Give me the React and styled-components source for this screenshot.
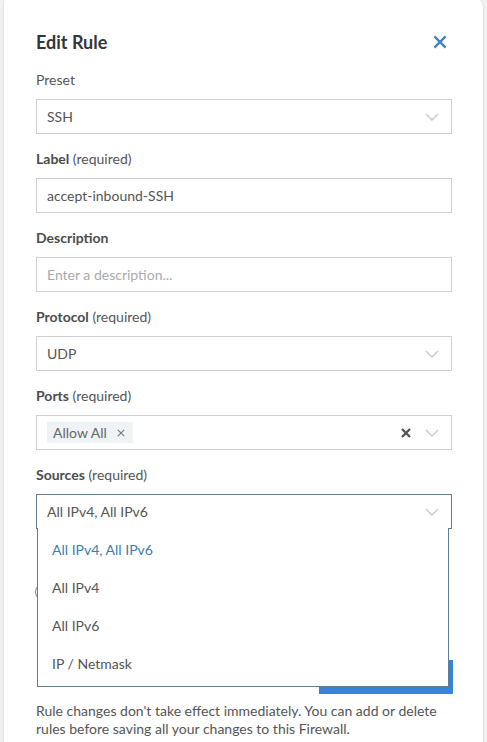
import React from 'react';
import styled, { createGlobalStyle } from 'styled-components';

const GlobalStyle = createGlobalStyle`
    html, body {
        margin: 0;
        padding: 0;
        background: #f1f1f1;
        font-family: Lato, "Open Sans", sans-serif;
    }
    * { box-sizing: border-box; }
`

const Card = styled.div`
    margin: -3px 4px 0 4px;
    min-height: 760px;
    background: #fff;
    border-radius: 6px 10px 0 0;
    box-shadow: 0 0 3px rgba(0, 0, 0, 0.12);
    padding: 33px 31px 0 32px;
    color: #555;
`

const Header = styled.div`
    display: flex;
    align-items: center;
    justify-content: space-between;
    height: 24px;
    margin-bottom: 17px;
`

const Title = styled.h2`
    margin: 0;
    font-size: 18px;
    font-weight: 700;
    color: #32363c;
    line-height: 24px;
`

const CloseButton = styled.button`
    width: 24px;
    height: 24px;
    padding: 0;
    border: none;
    background: none;
    display: flex;
    align-items: center;
    justify-content: center;
    color: #3f7fc4;
    cursor: pointer;
`

const Field = styled.div`
    position: relative;
    margin-bottom: ${p => p.$last ? '0' : '16px'};
`

const Label = styled.div`
    font-size: 14px;
    line-height: 18px;
    color: #555;
    margin-bottom: 10px;
    b { font-weight: 700; color: #4c4c4c; }
`

const Box = styled.div`
    position: relative;
    display: flex;
    align-items: center;
    height: 35px;
    padding: 0 12px 0 10px;
    border: 1px solid ${p => p.$active ? '#5f7f91' : '#cfcfcf'};
    background: #fff;
    font-size: 14px;
    color: ${p => p.$placeholder ? '#aaa' : '#555'};
`

const Value = styled.span`
    flex: 1;
    white-space: nowrap;
`

const Chip = styled.span`
    display: inline-flex;
    align-items: center;
    height: 21px;
    padding: 0 8px 0 6px;
    background: #eff3f8;
    color: #666;
    font-size: 14px;
`

const ChipRemove = styled.span`
    display: inline-flex;
    margin-left: 10px;
    color: #777;
`

const Clear = styled.span`
    display: inline-flex;
    margin-right: 14px;
    color: #555;
`

const Menu = styled.div`
    position: absolute;
    top: 100%;
    left: 0;
    right: 2px;
    z-index: 5;
    background: #fff;
    border: 1px solid #5f7f91;
    border-top: none;
    padding: 2px 0 4px;
`

const Option = styled.div`
    height: 38px;
    display: flex;
    align-items: center;
    padding-left: 14px;
    font-size: 14px;
    color: ${p => p.$selected ? '#3a7fab' : '#555'};
`

const RadioRow = styled.div`
    display: flex;
    align-items: center;
    height: 18px;
    margin-top: 54px;
`

const Radio = styled.span`
    width: 18px;
    height: 18px;
    margin-left: -1px;
    border-radius: 50%;
    border: 1px solid #6d8797;
`

const ButtonRow = styled.div`
    display: flex;
    justify-content: flex-end;
    margin-top: 59px;
`

const PrimaryButton = styled.button`
    width: 134px;
    height: 34px;
    border: none;
    background: #3683dc;
    color: #fff;
    font-family: inherit;
    font-size: 14px;
    font-weight: 700;
    margin-right: -1px;
`

const Note = styled.p`
    margin: 8px 0 0;
    font-size: 14px;
    line-height: 18px;
    color: #555;
`

const Chevron = () => (
    <svg width="14" height="8" viewBox="0 0 14 8" fill="none">
        <path d="M1 1l6 6 6-6" stroke="#c9c9c9" strokeWidth="1.4" />
    </svg>
)

const Cross = ({ size, weight }) => (
    <svg width={size} height={size} viewBox="0 0 10 10" fill="none">
        <path d="M1 1l8 8M9 1l-8 8" stroke="currentColor" strokeWidth={weight} />
    </svg>
)

const sources = ['All IPv4, All IPv6', 'All IPv4', 'All IPv6', 'IP / Netmask']

export default function App() {
    return (
        <>
            <GlobalStyle />
            <Card>
                <Header>
                    <Title>Edit Rule</Title>
                    <CloseButton aria-label="Close">
                        <Cross size={14} weight={1.6} />
                    </CloseButton>
                </Header>

                <Field>
                    <Label>Preset</Label>
                    <Box><Value>SSH</Value><Chevron /></Box>
                </Field>

                <Field>
                    <Label><b>Label</b> (required)</Label>
                    <Box><Value>accept-inbound-SSH</Value></Box>
                </Field>

                <Field>
                    <Label><b>Description</b></Label>
                    <Box $placeholder><Value>Enter a description...</Value></Box>
                </Field>

                <Field>
                    <Label><b>Protocol</b> (required)</Label>
                    <Box><Value>UDP</Value><Chevron /></Box>
                </Field>

                <Field>
                    <Label><b>Ports</b> (required)</Label>
                    <Box>
                        <Value>
                            <Chip>Allow All<ChipRemove><Cross size={8} weight={1.4} /></ChipRemove></Chip>
                        </Value>
                        <Clear><Cross size={10} weight={2.4} /></Clear>
                        <Chevron />
                    </Box>
                </Field>

                <Field $last>
                    <Label><b>Sources</b> (required)</Label>
                    <Box $active>
                        <Value>All IPv4, All IPv6</Value>
                        <Chevron />
                        <Menu>
                            {sources.map((s, i) => (
                                <Option key={s} $selected={i === 0}>{s}</Option>
                            ))}
                        </Menu>
                    </Box>
                    <RadioRow><Radio /></RadioRow>
                    <ButtonRow><PrimaryButton>Save</PrimaryButton></ButtonRow>
                </Field>

                <Note>
                    Rule changes don't take effect immediately. You can add or delete
                    rules before saving all your changes to this Firewall.
                </Note>
            </Card>
        </>
    );
}
